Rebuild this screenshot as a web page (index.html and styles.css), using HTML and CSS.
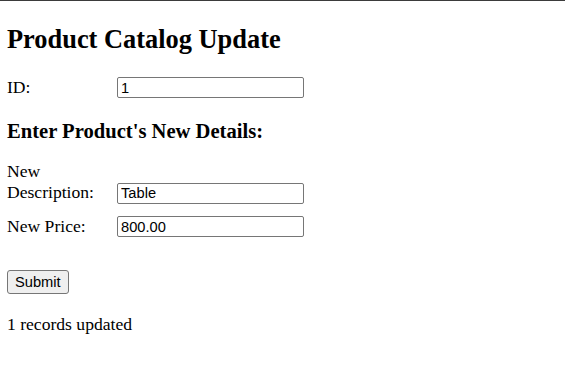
FILE: index.html
```html
<!DOCTYPE html>
<html lang="en">
<head>
<meta charset="utf-8">
<title>Product Catalog Update</title>
<link rel="stylesheet" href="styles.css">
</head>
<body>
<div class="topbar"></div>
<main class="page">
  <h2 class="title">Product Catalog Update</h2>
  <form class="form">
    <div class="field field-id">
      <label class="label" for="pid">ID:</label><input class="input" id="pid" type="text" value="1">
    </div>
    <h3 class="subtitle">Enter Product's New Details:</h3>
    <div class="field field-desc">
      <label class="label" for="pdesc">New Description:</label><input class="input" id="pdesc" type="text" value="Table">
    </div>
    <div class="field field-price">
      <label class="label" for="pprice">New Price:</label><input class="input" id="pprice" type="text" value="800.00">
    </div>
    <div class="actions">
      <button class="button" type="button">Submit</button>
    </div>
  </form>
  <p class="status">1 records updated</p>
</main>
</body>
</html>
```

FILE: styles.css
```css
html, body {
  margin: 0;
  padding: 0;
  background: #ffffff;
}

body {
  font-family: "Liberation Serif", "Times New Roman", serif;
  font-size: 17.6px;
  color: #000000;
}

.topbar {
  height: 1px;
  background: #3b3b3b;
}

.page {
  padding: 0 7px;
}

.title {
  font-size: 26.4px;
  font-weight: bold;
  margin: 23px 0 0;
}

.form {
  margin: 0;
}

.field {
  line-height: normal;
}

.field-id {
  margin-top: 21.5px;
}

.subtitle {
  font-size: 20.6px;
  font-weight: bold;
  margin: 22px 0 0;
}

.field-desc {
  margin-top: 18px;
}

.field-price {
  margin-top: 12px;
}

.label {
  display: inline-block;
  width: 110px;
  vertical-align: baseline;
}

.input {
  box-sizing: border-box;
  width: 187px;
  height: 21px;
  padding: 1px 3px;
  border: 1px solid #767676;
  border-radius: 2px;
  font-family: "Liberation Sans", Arial, sans-serif;
  font-size: 14.67px;
  color: #000000;
  background: #ffffff;
  vertical-align: baseline;
}

.actions {
  margin-top: 33px;
  line-height: normal;
}

.button {
  box-sizing: border-box;
  height: 24px;
  padding: 0 7px;
  border: 1px solid #767676;
  border-radius: 3px;
  background: #efefef;
  font-family: "Liberation Sans", Arial, sans-serif;
  font-size: 14.67px;
  color: #000000;
}

.status {
  margin: 20px 0 0;
}
```
